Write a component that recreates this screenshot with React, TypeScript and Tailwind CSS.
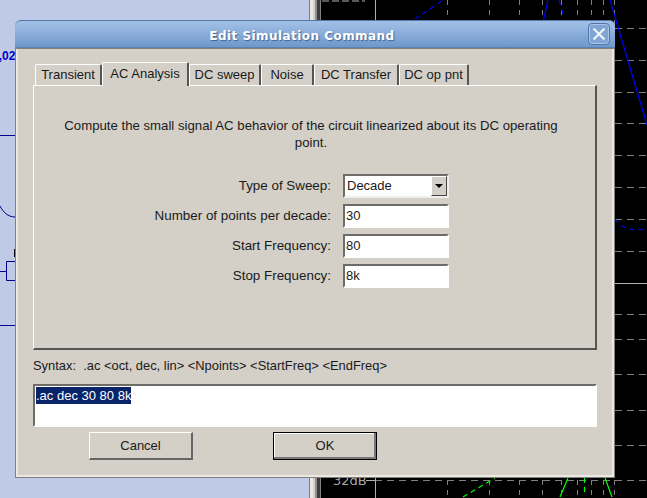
const fields = [
  { label: "Number of points per decade:", value: "30" },
  { label: "Start Frequency:", value: "80" },
  { label: "Stop Frequency:", value: "8k" },
];

const tabs = [
  { name: "Transient", width: "w-[67px]" },
  { name: "AC Analysis", width: "w-[87px]", active: true },
  { name: "DC sweep", width: "w-[72px]" },
  { name: "Noise", width: "w-[53px]" },
  { name: "DC Transfer", width: "w-[85px]" },
  { name: "DC op pnt", width: "w-[70px]" },
];

const sunken = "border-2 border-t-[#6e6c68] border-l-[#6e6c68] border-r-white border-b-white";

function Schematic() {
  return (
    <svg className="absolute inset-0 h-full w-full" viewBox="0 0 309 498" fill="none">
      <path d="M0 135.5H15M0 325.5H15M6.5 261.5H15M6.5 280.5H15M6.5 261.5V280.5M0 271.5H6.5" stroke="#00008c" />
      <path d="M0 206C3 212 8 217 15 217" stroke="#00008c" />
      <path d="M14.5 249V257" stroke="#000" />
    </svg>
  );
}

function Plot() {
  const vertical = [447.5, 489.5, 519.5, 542.5, 561.5, 577.5, 591.5, 603.5, 614.5];
  const horizontal = [28.5, 60.5, 92.5, 123.5, 155.5, 187.5, 219.5, 251.5, 314.5, 339.5, 374.5, 410.5, 445.5, 480.5];
  return (
    <svg className="absolute inset-0 h-full w-full" viewBox="0 0 326 498" fill="none">
      <g transform="translate(-321 0)">
        {vertical.map((x) => (
          <path key={x} d={`M${x} 0V498`} stroke="#808080" strokeDasharray="5 5" />
        ))}
        {horizontal.map((y) => (
          <path key={y} d={`M375 ${y}H647`} stroke="#808080" strokeDasharray="7 5" />
        ))}
        <path d="M375.5 0V498M366 480.5H375M614 283.5H647" stroke="#b0b0b0" />
        <text x="333" y="485" fill="#a8a8a8" fontFamily="DejaVu Sans" fontSize="13">32dB</text>
        <path d="M322 1H365" stroke="#b0b0b0" strokeDasharray="7 3" />
        <path d="M610 0L647 125M543.5 20L548 0" stroke="#0000ff" strokeWidth="1.2" />
        <path d="M415 19L443 0M559 0L563.5 16M615 219C620 227 632 233 647 228" stroke="#0000ff" strokeWidth="1.2" strokeDasharray="5 4" />
        <path d="M560 497L568 478M605 478L612 497" stroke="#00ff00" strokeWidth="1.2" />
        <path d="M463 497L495 478M584.5 478V496" stroke="#00ff00" strokeWidth="1.2" strokeDasharray="5 4" />
      </g>
    </svg>
  );
}

export default function App() {
  return (
    <div className="relative flex h-[498px] w-[647px] overflow-hidden bg-black font-['Liberation_Sans',sans-serif] text-[13px] text-[#1a1a1a]">
      {/* Left schematic window */}
      <div className="relative w-[309px] shrink-0 bg-[#bfcbe6]">
        <Schematic />
        <span className="absolute left-[-8px] top-[47px] text-[12px] font-bold text-[#0000d0]">0,02</span>
      </div>

      {/* Window edge between the two */}
      <div className="flex w-[12px] shrink-0">
        <div className="w-[1px] bg-[#808080]" />
        <div className="w-[3px] bg-[#ece9e2]" />
        <div className="w-[2px] bg-[#d4d0c8]" />
        <div className="w-[2px] bg-[#8f8f8f]" />
        <div className="w-[3px] bg-[#3c3c3c]" />
        <div className="w-[1px] bg-[#808080]" />
      </div>

      {/* Plot window */}
      <div className="relative flex-1 bg-black">
        <Plot />
      </div>

      {/* Dialog */}
      <div className="absolute left-[15px] top-[20px] flex h-[458px] w-[600px] flex-col rounded-t-[6px] bg-[#d4d0c8]">
        <div className="relative flex h-[28px] shrink-0 items-center justify-center rounded-t-[6px] border-t border-b border-t-[#4f76a8] border-b-[#5a82b6] bg-gradient-to-b from-[#a3c1e7] to-[#6f98cb] pr-[26px] pt-[3px] font-['DejaVu_Sans',sans-serif] text-[12px] font-bold tracking-[0.45px] text-white [text-shadow:1px_1px_1px_#3f6596]">
          Edit Simulation Command
          <div className="absolute right-[5px] top-[2px] flex h-[22px] w-[22px] items-center justify-center rounded-[4px] border border-[#4f76a8] bg-[#80a5d4] shadow-[inset_0_0_0_1px_#a9c5e8]">
            <svg width="14" height="14" viewBox="0 0 14 14" fill="none">
              <path d="M1.5 1.5L12.5 12.5M12.5 1.5L1.5 12.5" stroke="#eef4fb" strokeWidth="2.2" />
            </svg>
          </div>
        </div>

        <div className="flex flex-1 flex-col border-x-[3px] border-b-[3px] border-[#ece9e2] outline outline-[1px] -outline-offset-[1px] outline-[#808080]">
          <div className="flex flex-col pl-[15px] pr-[15px] pt-[14px]">
            <div className="flex h-[23px] items-end pl-[2px]">
              {tabs.map((tab) => (
                <div
                  key={tab.name}
                  className={
                    tab.active
                      ? "relative z-10 -mb-[1px] flex h-[24px] w-[87px] items-center justify-center rounded-t-[2px] border-l border-r-2 border-t border-l-white border-r-[#555] border-t-white bg-[#d4d0c8] pb-[2px]"
                      : `flex h-[21px] ${tab.width} items-center justify-center rounded-t-[2px] border-l border-r-2 border-t border-l-white border-r-[#555] border-t-white`
                  }
                >
                  {tab.name}
                </div>
              ))}
            </div>

            <div className="flex h-[265px] flex-col items-center border-b-2 border-l border-r-2 border-t border-b-[#555] border-l-white border-r-[#555] border-t-white px-[30px] pt-[31px]">
              <p className="-ml-[7px] text-center text-[13.2px] leading-[17px]">
                Compute the small signal AC behavior of the circuit linearized about its DC operating point.
              </p>
              <div className="mt-[23px] flex w-full flex-col gap-[6px] -ml-[20px]">
                <div className="flex h-[24px] items-center">
                  <span className="w-[277px] shrink-0 text-right text-[13.4px]">Type of Sweep:</span>
                  <div className="ml-[12px] flex h-[24px] w-[106px] shrink-0 items-center border-2 border-b-[#eee] border-l-[#6e6c68] border-r-[#eee] border-t-[#6e6c68] bg-white pl-[2px]">
                    <span className="flex-1">Decade</span>
                    <div className="flex h-[20px] w-[16px] items-center justify-center border border-b-[#444] border-l-white border-r-[#444] border-t-white bg-[#d4d0c8]">
                      <div className="h-0 w-0 border-x-[4px] border-t-[4px] border-x-transparent border-t-black" />
                    </div>
                  </div>
                </div>
                {fields.map((field) => (
                  <div key={field.label} className="flex h-[24px] items-center">
                    <span className="w-[277px] shrink-0 text-right text-[13.4px]">{field.label}</span>
                    <div className={`ml-[12px] flex h-[24px] w-[106px] shrink-0 items-center bg-white pl-[1px] ${sunken}`}>
                      {field.value}
                    </div>
                  </div>
                ))}
              </div>
            </div>

            <div className="mt-[6px] h-[20px] whitespace-pre text-[12.9px] leading-[20px]">{"Syntax:  .ac <oct, dec, lin> <Npoints> <StartFreq> <EndFreq>"}</div>

            <div className={`mt-[8px] h-[43px] w-full bg-white pl-[1px] ${sunken}`}>
              <span className="bg-[#0a246a] py-[1px] text-white">.ac dec 30 80 8k</span>
            </div>

            <div className="mt-[5px] flex h-[28px]">
              <button className="ml-[56px] h-[28px] w-[104px] border-b-2 border-l border-r-2 border-t border-b-[#666] border-l-white border-r-[#666] border-t-white">
                Cancel
              </button>
              <button className="ml-[80px] h-[28px] w-[104px] border border-black shadow-[inset_-2px_-2px_0_#777,inset_1px_1px_0_#fff]">
                OK
              </button>
            </div>
          </div>
        </div>
      </div>
    </div>
  );
}
